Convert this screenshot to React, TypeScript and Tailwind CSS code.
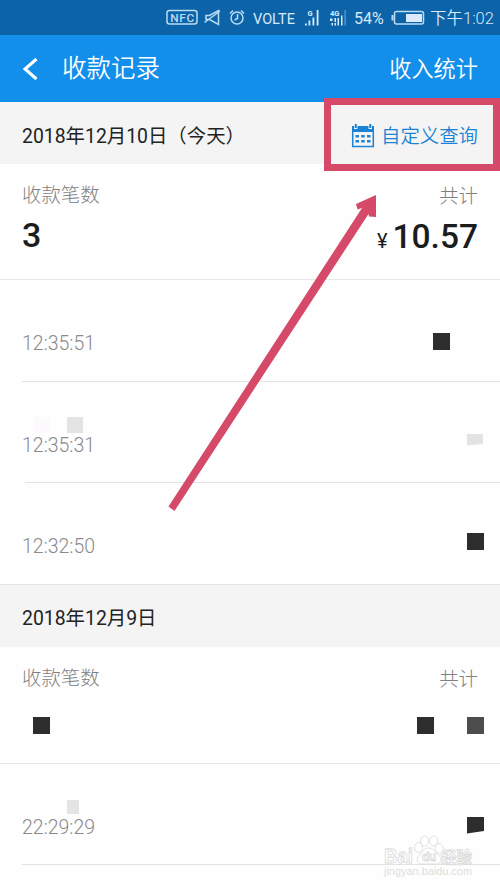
import type { ReactNode } from 'react';

interface Mark {
  className: string;
  clip?: boolean;
}

interface RowProps {
  time: string;
  marks: Mark[];
  line?: string;
}

interface SummaryProps {
  count?: string;
  total?: string;
  children?: ReactNode;
}

function SignalIcon({ label, dual }: { label: string; dual?: boolean }) {
  return (
    <svg width="18" height="18" viewBox="0 0 18 18" className="shrink-0" fill="#d6eafa">
      <text x={dual ? 0 : 2.5} y="6.5" fontSize="7.5" fontWeight="700" fontFamily="Roboto, sans-serif">
        {label}
      </text>
      {dual ? (
        <>
          <path d="M0 9.500h2.500V12H0zM1.500 14h1.500v2.500H1.500zM4.500 9h1.500v4H4.500zM4.500 14h1.500v2.500H4.500zM7.500 9h1.500v7.500H7.500zM11 6.500h1.500v10H11z" />
          <path d="M14.500 1h1.200v15.500h-1.200z" opacity=".45" />
        </>
      ) : (
        <path d="M0 14.500h1.800v2H0zM3.500 11.500h1.800v5H3.500zM7.500 8.500h1.800v8H7.500zM11.700 1h1.800v15.500h-1.800z" />
      )}
    </svg>
  );
}

function StatusBar() {
  return (
    <div className="flex h-[35px] items-center bg-[#0c63a8] text-[#d6eafa]">
      <svg width="82" height="20" viewBox="0 0 82 20" className="ml-[166px] shrink-0" fill="none" stroke="#b9dcf5" strokeWidth="1.5">
        <rect x="1" y="2.5" width="30" height="13.5" rx="2.5" />
        <text x="4.2" y="13.6" fontSize="11.8" fontWeight="500" textLength="24" fill="#b9dcf5" stroke="none" fontFamily="Roboto, sans-serif">
          NFC
        </text>
        <path d="M40 7.500h3.500l9-5v14L43.500 11.500H40zM38.500 14.500 54 3" />
        <circle cx="71" cy="10" r="6" />
        <path d="M71.500 6v4.500L68.500 12M64 5.500l3-3M78 5.500l-3-3" />
      </svg>
      <span className="ml-[5px] w-[42px] pt-1 text-[14.500px]">VOLTE</span>
      <div className="ml-[10px] flex w-[43px] justify-between">
        <SignalIcon label="G" />
        <SignalIcon label="4G" dual />
      </div>
      <span className="ml-[6px] w-[31px] whitespace-nowrap pt-[2px] text-[16px]">54%</span>
      <svg width="34" height="16" viewBox="0 0 34 16" className="ml-[6px] shrink-0" fill="none">
        <rect x="3.500" y="1.500" width="29" height="12.500" rx="2" stroke="#b9dcf5" strokeWidth="1.500" />
        <path d="M1.500 5v5.500" stroke="#b9dcf5" strokeWidth="2" />
        <rect x="15" y="4" width="16" height="8" fill="#dbe9fa" />
      </svg>
      <span className="ml-[5px] whitespace-nowrap pt-[4px] text-[16.500px] font-[350]">下午1:02</span>
    </div>
  );
}

function CalendarIcon() {
  return (
    <svg width="24" height="24" viewBox="0 0 24 24" fill="#1b83d6">
      <path d="M1 2h2v3h3.500V2h11v3H21V2h2v6H1z" />
      <path d="M3.800 0h2v4h-2zM18.300 0h2v4h-2z" />
      <path d="M1.700 7.500v15h20.600v-15" fill="none" stroke="#1b83d6" strokeWidth="1.500" />
      <path d="M4.500 11h3.500v2.500H4.500zM10.200 11h3.500v2.500h-3.500zM16 11h3.500v2.500H16zM4.500 16h3.500v2.500H4.500zM10.200 16h3.500v2.500h-3.500zM16 16h3.500v2.500H16z" />
    </svg>
  );
}

function Summary({ count, total, children }: SummaryProps) {
  return (
    <div className="relative h-[116px] px-[22px] pt-[18px]">
      <div className="flex h-[28px] justify-between text-[19.400px] leading-[28px] font-light text-[#808080]">
        <span>收款笔数</span>
        <span className="pt-px">共计</span>
      </div>
      <div className="flex h-[54px] justify-between font-medium text-[#1c1c1c]">
        <span className="text-[34px] leading-[51px]">{count}</span>
        {total && (
          <span className="text-[33.500px] leading-[54px]">
            <span className="mr-[5px] text-[20px] font-normal">¥</span>
            {total}
          </span>
        )}
      </div>
      {children}
    </div>
  );
}

function DateBar({ label, children }: { label: string; children?: ReactNode }) {
  return (
    <div className="flex h-[62px] items-center justify-between bg-[#f4f4f4] px-[22px] pt-[7px] text-[19.400px] text-[#222]">
      <span>{label}</span>
      {children}
    </div>
  );
}

function Row({ time, marks, line = 'left-[22px]' }: RowProps) {
  return (
    <div className="relative flex h-[101.500px] items-end pb-[23.500px] pl-[22px]">
      <span className="text-[19.500px] leading-[28px] font-light text-[#8a8a8a]">{time}</span>
      {marks.map((m) => (
        <i key={m.className} className={`absolute ${m.className} ${m.clip ? '[clip-path:polygon(0_0,100%_0,100%_85%,0_100%)]' : ''}`} />
      ))}
      <div className={`absolute right-0 bottom-0 h-px bg-[#e3e3e3] ${line}`} />
    </div>
  );
}

function Watermark() {
  return (
    <svg width="100" height="50" viewBox="0 0 100 50" className="absolute top-[833px] left-[380px]" fill="#fff" stroke="#d9d9d9" strokeWidth="0.8">
      <g fontFamily="'Liberation Sans', sans-serif" fontWeight="700">
        <text x="4" y="30" fontSize="20" textLength="29" lengthAdjust="spacingAndGlyphs">Bai</text>
        <text x="61" y="30" fontSize="15.500" textLength="31" fontFamily="Noto Sans CJK SC, sans-serif">经验</text>
        <text x="4" y="42" fontSize="10.500" fontWeight="400" textLength="88" lengthAdjust="spacingAndGlyphs" fill="#ddd" stroke="none">
          jingyan.baidu.com
        </text>
      </g>
      <ellipse cx="38.500" cy="14.500" rx="4" ry="5" />
      <ellipse cx="44.500" cy="8" rx="4" ry="5" />
      <ellipse cx="53.500" cy="8" rx="4" ry="5" />
      <ellipse cx="59" cy="15.500" rx="4" ry="5" />
      <path d="M48.500 15c-5 0-6 5-9 7-4 4-3 9 3 9h13c6 0 7-5 3-9-4-3-5-7-10-7z" />
      <text x="42" y="28" fontSize="12" fontWeight="700" textLength="14" fontFamily="'Liberation Sans', sans-serif">du</text>
    </svg>
  );
}

export default function App() {
  return (
    <div className="relative h-[889px] w-[500px] overflow-hidden bg-[#fefefe] font-['Roboto','Noto_Sans_CJK_SC',sans-serif]">
      <StatusBar />

      {/* Title bar */}
      <div className="flex h-[67px] items-center bg-[#128eeb] pr-[22px] pl-[22px] text-white">
        <svg width="16" height="24" viewBox="0 0 16 24" fill="none" stroke="#fff" strokeWidth="3">
          <path d="M14.500 2 3 12l11.500 10" />
        </svg>
        <h1 className="ml-[24px] pt-px text-[24.500px] font-[350]">收款记录</h1>
        <span className="ml-auto pt-[3px] text-[22.200px] font-[350]">收入统计</span>
      </div>

      {/* Today */}
      <DateBar label="2018年12月10日（今天）">
        <span className="flex items-center gap-[6px] font-[350] text-[#1b83d6]">
          <CalendarIcon />
          自定义查询
        </span>
      </DateBar>
      <Summary count="3" total="10.57" />
      <div className="-mt-px h-px bg-[#e8e8e8]" />
      <Row time="12:35:51" marks={[{ className: 'top-[53px] left-[433px] size-[17px] bg-[#2d2d2d]' }]} />
      <Row
        time="12:35:31"
        line="left-[25px]"
        marks={[
          { className: 'top-[35px] left-[35px] size-[16px] bg-[#fcfafd]' },
          { className: 'top-[35px] left-[67px] size-[16px] bg-[#e4e4e4]' },
          { className: 'top-[52px] left-[467px] h-[12px] w-[16px] bg-[#e4e2e3]', clip: true },
        ]}
      />
      <Row time="12:32:50" line="left-0" marks={[{ className: 'top-[50px] left-[467px] size-[17px] bg-[#2d2d2d]' }]} />

      {/* Previous day */}
      <DateBar label="2018年12月9日" />
      <Summary>
        <i className="absolute top-[70px] left-[33px] size-[17px] bg-[#2d2d2d]" />
        <i className="absolute top-[70px] left-[417px] size-[17px] bg-[#2d2d2d]" />
        <i className="absolute top-[70px] left-[467px] size-[17px] bg-[#4d4d4d]" />
      </Summary>
      <div className="h-px bg-[#e8e8e8]" />
      <Row
        time="22:29:29"
        marks={[
          { className: 'top-[36px] left-[67px] h-[14px] w-[12px] bg-[#e4e4e4]' },
          { className: 'top-[53px] left-[467px] size-[17px] bg-[#2d2d2d]', clip: true },
        ]}
      />

      {/* Highlight frame and pointer */}
      <div className="absolute top-[98px] left-[324px] h-[73px] w-[176px] border-[7px] border-[#d54a68]" />
      <svg width="220" height="320" viewBox="0 0 220 320" className="absolute top-[193px] left-[165px]" fill="#d54a68">
        <path d="M3.500 313.500 197 15l-4.500 1.500L191 11l20-9v22l-7-.5-.5-2.500L9.500 318z" />
      </svg>
      <Watermark />
    </div>
  );
}
